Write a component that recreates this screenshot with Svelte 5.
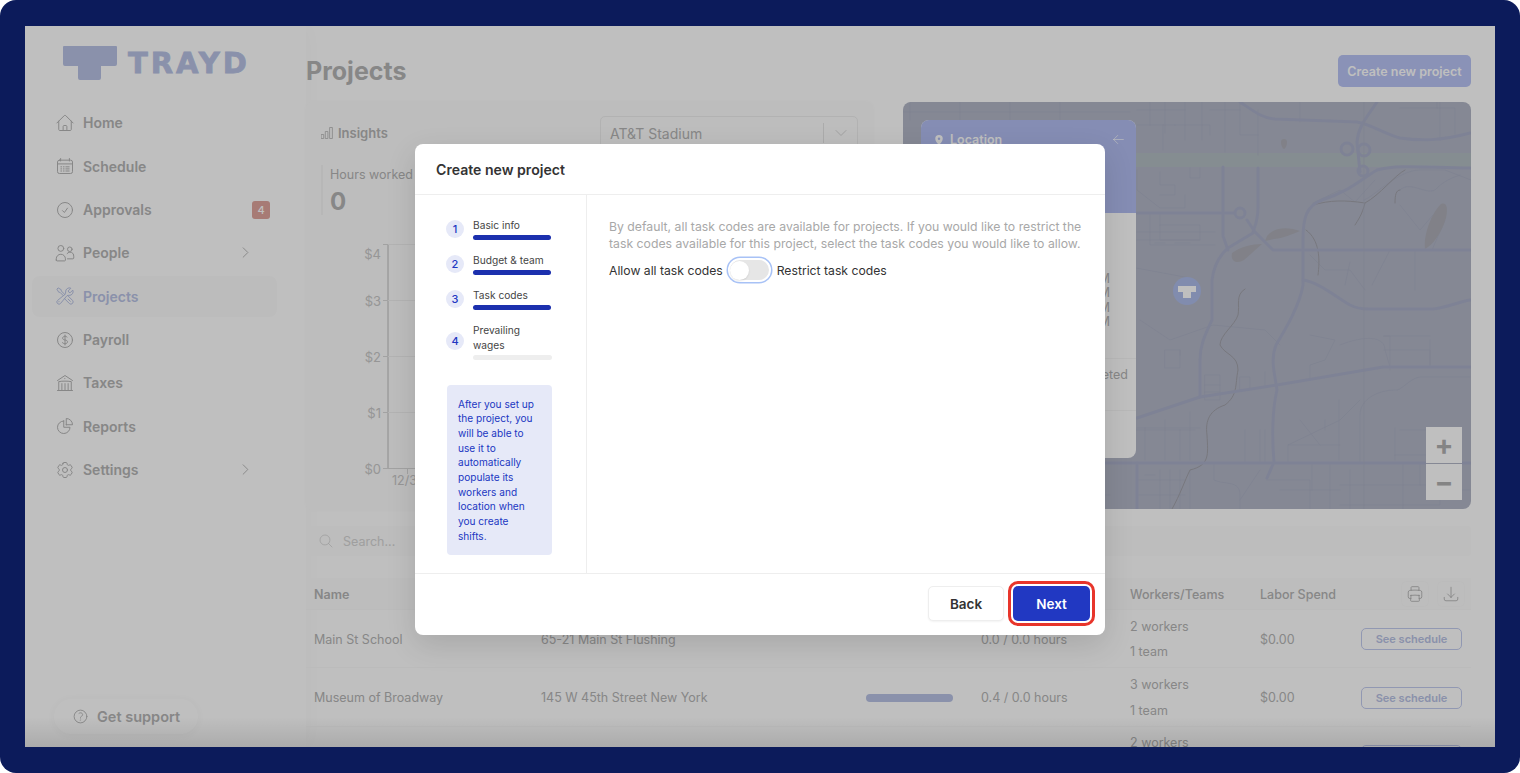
<script>
  const nav = [
    { label: 'Home', icon: 'M2.25 12l8.954-8.955c.44-.439 1.152-.439 1.591 0L21.75 12M4.5 9.75v10.125c0 .621.504 1.125 1.125 1.125H9.75v-4.875c0-.621.504-1.125 1.125-1.125h2.25c.621 0 1.125.504 1.125 1.125V21h4.125c.621 0 1.125-.504 1.125-1.125V9.75M8.25 21h8.25' },
    { label: 'Schedule', icon: 'M6.75 3v3M17.25 3v3M5.25 5h13.5A2.25 2.25 0 0121 7.25v11.5A2.25 2.25 0 0118.75 21H5.25A2.25 2.25 0 013 18.75V7.25A2.25 2.25 0 015.25 5zM3 9.5h18M7 13h1M10 13h1M13 13h4M7 15.5h1M10 15.5h1M13 15.5h4M7 18h1M10 18h1M13 18h4' },
    { label: 'Approvals', icon: 'M9 12.75L11.25 15 15 9.75M21 12a9 9 0 11-18 0 9 9 0 0118 0z', badge: '4' },
    { label: 'People', icon: 'M10.5 6.5a3.5 3.5 0 11-7 0 3.5 3.5 0 017 0zM20.5 7.5a2.75 2.75 0 11-5.5 0 2.75 2.75 0 015.5 0zM1.5 20.5v-1.5a5.5 5.5 0 0111 0v1.5c0 .6-.4 1-1 1h-9c-.6 0-1-.4-1-1zM14.5 12.6a4.5 4.5 0 018 3.2v2.2c0 .6-.4 1-1 1h-6.5', chevron: true },
    { label: 'Projects', active: true, icon: 'M11.42 15.17L17.25 21A2.652 2.652 0 0021 17.25l-5.877-5.877M11.42 15.17l2.496-3.03c.317-.384.74-.626 1.208-.766M11.42 15.17l-4.655 5.653a2.548 2.548 0 11-3.586-3.586l6.837-5.63m5.108-.233c.55-.164 1.163-.188 1.743-.14a4.5 4.5 0 004.486-6.336l-3.276 3.277a3.004 3.004 0 01-2.25-2.25l3.276-3.276a4.5 4.5 0 00-6.336 4.486c.091 1.076-.071 2.264-.904 2.95l-.102.085m-1.745 1.437L5.909 7.5H4.5L2.25 3.75l1.5-1.5L7.5 4.5v1.409l4.26 4.26m-1.745 1.437l1.745-1.437m6.615 8.206L15.75 15.75M4.867 19.125h.008v.008h-.008v-.008z' },
    { label: 'Payroll', icon: 'M12 6v12m-3-2.818l.879.659c1.171.879 3.07.879 4.242 0 1.172-.879 1.172-2.303 0-3.182C13.536 12.219 12.768 12 12 12c-.725 0-1.45-.22-2.003-.659-1.106-.879-1.106-2.303 0-3.182s2.9-.879 4.006 0l.415.33M21 12a9 9 0 11-18 0 9 9 0 0118 0z' },
    { label: 'Taxes', icon: 'M12 21v-8.25M15.75 21v-8.25M8.25 21v-8.25M3 9l9-6 9 6m-1.5 12V10.332A48.36 48.36 0 0012 9.75c-2.551 0-5.056.2-7.5.582V21M3 21h18M12 6.75h.008v.008H12V6.75z' },
    { label: 'Reports', icon: 'M10.5 6a7.5 7.5 0 107.5 7.5h-7.5V6zM13.5 10.5H21A7.5 7.5 0 0013.5 3v7.5z' },
    { label: 'Settings', chevron: true, icon: 'M9.594 3.94c.09-.542.56-.94 1.11-.94h2.593c.55 0 1.02.398 1.11.94l.213 1.281c.063.374.313.686.645.87.074.04.147.083.22.127.324.196.72.257 1.075.124l1.217-.456a1.125 1.125 0 011.37.49l1.296 2.247a1.125 1.125 0 01-.26 1.431l-1.003.827c-.293.24-.438.613-.431.992a6.759 6.759 0 010 .255c-.007.378.138.75.43.99l1.005.828c.424.35.534.954.26 1.43l-1.298 2.247a1.125 1.125 0 01-1.369.491l-1.217-.456c-.355-.133-.75-.072-1.076.124a6.57 6.57 0 01-.22.128c-.331.183-.581.495-.644.869l-.213 1.28c-.09.543-.56.941-1.11.941h-2.594c-.55 0-1.02-.398-1.11-.94l-.213-1.281c-.062-.374-.312-.686-.644-.87a6.52 6.52 0 01-.22-.127c-.325-.196-.72-.257-1.076-.124l-1.217.456a1.125 1.125 0 01-1.369-.49l-1.297-2.247a1.125 1.125 0 01.26-1.431l1.004-.827c.292-.24.437-.613.43-.992a6.932 6.932 0 010-.255c.007-.378-.138-.75-.43-.99l-1.004-.828a1.125 1.125 0 01-.26-1.43l1.297-2.247a1.125 1.125 0 011.37-.491l1.216.456c.356.133.751.072 1.076-.124.072-.044.146-.087.22-.128.332-.183.582-.495.644-.869l.214-1.281zM15 12a3 3 0 11-6 0 3 3 0 016 0z' }
  ];

  const rows = [
    { name: 'Main St School', address: '65-21 Main St Flushing', bar: false, hours: '0.0 / 0.0 hours', workers: '2 workers', teams: '1 team', spend: '$0.00' },
    { name: 'Museum of Broadway', address: '145 W 45th Street New York', bar: true, hours: '0.4 / 0.0 hours', workers: '3 workers', teams: '1 team', spend: '$0.00' },
    { name: '', address: '', bar: false, hours: '', workers: '2 workers', teams: '1 team', spend: '' }
  ];

  const steps = [
    { n: 1, label: 'Basic info', done: true },
    { n: 2, label: 'Budget & team', done: true },
    { n: 3, label: 'Task codes', done: true },
    { n: 4, label: 'Prevailing wages', done: false }
  ];

  const yTicks = ['$4', '$3', '$2', '$1', '$0'];
  const times = ['8:00 AM', '9:00 AM', '10:00 AM', '11:00 AM'];

  const majorRoads = [
    'M1240 102C1255 112 1262 118 1275 119L1357 122C1370 124 1385 134 1400 138C1420 141 1440 141 1470 133',
    'M1377 102C1368 116 1358 126 1357 142L1360 172',
    'M1470 168C1430 168 1400 164 1377 170C1360 180 1348 192 1322 200C1306 206 1303 218 1303 240L1303 285C1300 305 1285 330 1276 345C1270 360 1275 375 1277 390C1272 410 1272 440 1274 462L1267 478',
    'M1258 168V207C1258 222 1254 228 1253 232',
    'M1223 167V236L1228 250',
    'M1137 213H1233',
    'M1247 220L1255 232L1273 250H1470',
    'M1253 233L1228 248C1220 255 1214 265 1212 280V320C1205 335 1200 345 1200 360V397',
    'M1303 280C1318 282 1335 296 1350 305C1356 308 1362 309 1368 309H1433C1445 308 1458 302 1470 300',
    'M1137 418L1200 397L1277 385L1383 367H1470',
    'M1100 463H1470',
    'M903 463H925',
    'M903 150H921',
    'M1137 463V509'
  ];

  const minorRoads = [
    'M1137 110H1185M1150 102V125M1165 102V133M1185 102V140M1175 125H1210V135M1202 102V140',
    'M1137 125H1175M1163 125V150M1210 110H1240M1225 102V152M1240 102V135H1258M1258 110V155',
    'M1300 102V122M1440 102V140M1400 108H1455V134M1437 102V108',
    'M1137 170V190L1160 208H1185V195M1160 172V185H1175V195H1160M1190 168V178H1200V168',
    'M1150 213V245H1215M1160 213V240H1200V225H1160M1137 232H1215M1137 240H1200',
    'M1155 243H1165M1175 243H1190M1120 265L1190 278V290',
    'M1313 203L1340 190L1355 202L1375 180',
    'M1364 200C1375 196 1398 170 1420 170H1445L1471 180M1400 190C1410 180 1425 195 1435 190C1440 185 1445 180 1460 175',
    'M1400 205L1420 230L1433 215L1445 220L1432 250',
    'M1350 262L1345 285M1390 250L1372 285M1415 250V290',
    'M1140 320L1170 340L1213 325L1265 330L1280 345',
    'M1165 350H1180V368H1165ZM1180 350V355',
    'M1310 255L1325 270H1350L1365 290',
    'M1310 335L1335 340L1325 360L1310 365V380',
    'M1340 345C1365 335 1385 336 1385 350L1390 367',
    'M1384 336H1390V370M1384 350H1430V365M1430 340V367M1384 336H1430',
    'M1205 375H1220V400H1205ZM1205 385H1220M1205 392H1220',
    'M1240 377H1250V390H1240ZM1265 372V386',
    'M1360 400L1340 420L1288 445V445H1340M1325 420V430M1339 400V460M1288 445V463M1300 420L1320 445',
    'M1470 377H1420C1410 378 1400 392 1395 390C1380 390 1360 398 1360 415V463',
    'M1400 430H1430M1395 428V460M1395 455H1430',
    'M1145 428V460M1165 420V460M1190 412V460M1180 430V460M1245 430V463M1260 430V463M1265 430V463',
    'M1100 430H1195M1137 428H1200',
    'M1160 470V509M1170 470V509M1180 470V509M1190 470V509M1137 480H1185M1137 495H1185M1145 475H1155',
    'M1214 463V480C1225 485 1240 480 1240 495V509M1260 470L1240 500',
    'M1267 480H1310V509M1312 463V490M1330 463V509M1350 470V509M1280 490H1340',
    'M1340 485H1440V505H1340M1403 463V509M1420 463V485M1440 470V480M1470 490H1445',
    'M903 475H921M903 490H921M912 463V509',
    'M925 463V509M940 463V509M960 470V509M985 470V509M1000 463V509M1020 480V509M1060 470V509M1100 463V509',
    'M925 480H1100M950 495H1110',
    'M910 102V120M960 102V120M1010 102V120M1060 102V120M903 112H1130',
    'M903 200H921M903 300L921 290M903 380H921M912 225V260'
  ];

  const creek = [
    'M1313 205C1330 200 1345 200 1365 203C1362 215 1358 220 1355 225',
    'M1365 203C1380 195 1395 175 1405 170M1395 203C1395 195 1396 190 1400 190',
    'M1306 230C1320 240 1320 260 1318 275',
    'M1245 289C1235 295 1240 305 1238 315C1235 325 1220 335 1220 345C1225 355 1238 355 1238 370C1235 385 1238 395 1225 405C1210 410 1205 420 1207 435C1208 455 1210 465 1190 470C1185 480 1180 495 1172 509'
  ];

  const lakes = [
    'M1267 236C1275 226 1290 227 1300 231C1292 234 1285 238 1274 239L1265 241Z',
    'M1232 253C1240 247 1252 244 1262 244C1255 250 1250 255 1244 260C1238 264 1230 262 1232 253Z',
    'M1441 204C1447 202 1448 208 1446 218C1442 232 1433 245 1425 249C1423 235 1432 212 1441 204Z',
    'M1281 142a3 3 0 016 0c0 4-2 7-3 7s-3-3-3-7z'
  ];

  const loops = [
    { cx: 1347, cy: 149, r: 6 },
    { cx: 1364, cy: 150, r: 6 },
    { cx: 1363, cy: 171, r: 5 },
    { cx: 1240, cy: 213, r: 5 }
  ];
</script>

<div class="frame">
  <div class="app">
    <aside class="sidebar">
      <div class="logo">
        <svg class="logo-mark" viewBox="0 0 54 34" aria-hidden="true">
          <path d="M1 0H53a1 1 0 011 1V18a2 2 0 01-2 2H38V32a2 2 0 01-2 2H17a2 2 0 01-2-2V20H2a2 2 0 01-2-2V1a1 1 0 011-1z" />
        </svg>
        <span class="logo-text">TRAYD</span>
      </div>
      <nav class="nav">
        {#each nav as item}
          <div class="nav-row" class:active={item.active}>
            <svg class="nav-icon" viewBox="0 0 24 24" aria-hidden="true"><path d={item.icon} /></svg>
            <span class="nav-label">{item.label}</span>
            {#if item.badge}<span class="badge">{item.badge}</span>{/if}
            {#if item.chevron}
              <svg class="chevron" viewBox="0 0 24 24" aria-hidden="true"><path d="M8.25 4.5l7.5 7.5-7.5 7.5" /></svg>
            {/if}
          </div>
        {/each}
      </nav>
      <div class="support">
        <svg viewBox="0 0 24 24" aria-hidden="true"><path d="M9.879 7.519c1.171-1.025 3.071-1.025 4.242 0 1.172 1.025 1.172 2.687 0 3.712-.203.179-.43.326-.67.442-.745.361-1.45.999-1.45 1.827v.75M21 12a9 9 0 11-18 0 9 9 0 0118 0zm-9 5.25h.008v.008H12v-.008z" /></svg>
        <span>Get support</span>
      </div>
    </aside>

    <main class="main">
      <header class="top">
        <h1>Projects</h1>
        <button class="create">Create new project</button>
      </header>

      <section class="panels">
        <div class="insights">
          <div class="insights-head">
            <div class="insights-title">
              <svg viewBox="0 0 12 12" aria-hidden="true"><path d="M.5 7.5h2.2v4H.5zM4.7 4.5h2.2v7H4.7zM9 .5h2.4v11H9z" /></svg>
              <span>Insights</span>
            </div>
            <div class="select">
              <span>AT&amp;T Stadium</span>
              <i class="select-sep"></i>
              <svg viewBox="0 0 24 24" aria-hidden="true"><path d="M4.5 8.25l7.5 7.5 7.5-7.5" /></svg>
            </div>
          </div>
          <div class="stat">
            <div class="stat-label">Hours worked</div>
            <div class="stat-value">0</div>
          </div>
          <div class="chart">
            <div class="y-labels">
              {#each yTicks as t}
                <div class="y-row">
                  <span class="y-text">{t}</span>
                  <i class="y-tick"></i>
                </div>
              {/each}
            </div>
            <div class="x-row">
              <i class="x-tick"></i>
              <span>12/31</span>
            </div>
          </div>
        </div>

        <div class="map">
          <svg class="map-art" viewBox="903 102 568 407" preserveAspectRatio="none" aria-hidden="true">
            <path class="highway" d="M903 160H1471" />
            {#each minorRoads as d}<path class="minor" {d} />{/each}
            {#each lakes as d}<path class="lake" {d} />{/each}
            {#each creek as d}<path class="creek" {d} />{/each}
            {#each majorRoads as d}<path class="major" {d} />{/each}
            {#each loops as c}<circle class="major" cx={c.cx} cy={c.cy} r={c.r} />{/each}
            <path class="meridian" d="M1364 102V509" />
            <circle class="pin-bg" cx="1187" cy="291" r="14" />
            <path class="pin-t" d="M1178 286H1196V292H1191V298H1183V292H1178Z" />
          </svg>
          <div class="loc-panel">
            <div class="loc-head">
              <svg viewBox="0 0 24 24" aria-hidden="true"><path d="M12 2a7.5 7.5 0 00-7.5 7.5C4.5 15 12 22 12 22s7.5-7 7.5-12.5A7.5 7.5 0 0012 2zm0 10a2.5 2.5 0 110-5 2.5 2.5 0 010 5z" /></svg>
              <span class="loc-title">Location</span>
              <svg class="loc-back" viewBox="0 0 24 24" aria-hidden="true"><path d="M10.5 19.5L3 12m0 0l7.5-7.5M3 12h18" /></svg>
            </div>
            <div class="loc-times">
              {#each times as t}<div>{t}</div>{/each}
            </div>
            <div class="loc-status">Completed</div>
          </div>
          <div class="zoom-ctl">
            <button>+</button>
            <button>−</button>
          </div>
        </div>
      </section>

      <div class="search">
        <svg viewBox="0 0 24 24" aria-hidden="true"><path d="M21 21l-5.197-5.197m0 0A7.5 7.5 0 105.196 5.196a7.5 7.5 0 0010.607 10.607z" /></svg>
        <span>Search...</span>
      </div>

      <div class="table">
        <div class="t-row t-head">
          <span>Name</span>
          <span>Address</span>
          <span>Progress</span>
          <span>Hours</span>
          <span>Workers/Teams</span>
          <span>Labor Spend</span>
          <span class="t-actions">
            <i class="icon-btn"><svg viewBox="0 0 24 24" aria-hidden="true"><path d="M6.72 13.829c-.24.03-.48.062-.72.096m.72-.096a42.415 42.415 0 0110.56 0m-10.56 0L6.34 18m10.94-4.171c.24.03.48.062.72.096m-.72-.096L17.66 18m0 0l.229 2.523a1.125 1.125 0 01-1.12 1.227H7.231c-.662 0-1.18-.568-1.12-1.227L6.34 18m11.318 0h1.091A2.25 2.25 0 0021 15.75V9.456c0-1.081-.768-2.015-1.837-2.175a48.055 48.055 0 00-1.913-.247M6.34 18H5.25A2.25 2.25 0 013 15.75V9.456c0-1.081.768-2.015 1.837-2.175a48.041 48.041 0 011.913-.247m10.5 0a48.536 48.536 0 00-10.5 0m10.5 0V3.375c0-.621-.504-1.125-1.125-1.125h-8.25c-.621 0-1.125.504-1.125 1.125v3.659" /></svg></i>
            <i class="icon-btn"><svg viewBox="0 0 24 24" aria-hidden="true"><path d="M3 16.5v2.25A2.25 2.25 0 005.25 21h13.5A2.25 2.25 0 0021 18.75V16.5M16.5 12L12 16.5m0 0L7.5 12m4.5 4.5V3" /></svg></i>
          </span>
        </div>
        {#each rows as r}
          <div class="t-row t-body">
            <span>{r.name}</span>
            <span>{r.address}</span>
            <span>{#if r.bar}<i class="progress"></i>{/if}</span>
            <span>{r.hours}</span>
            <span class="stack"><b>{r.workers}</b><b>{r.teams}</b></span>
            <span>{r.spend}</span>
            <span><button class="see">See schedule</button></span>
          </div>
        {/each}
      </div>
    </main>

    <div class="scrim"></div>

    <div class="modal" role="dialog" aria-label="Create new project">
      <div class="modal-head">Create new project</div>
      <div class="modal-body">
        <div class="steps-col">
          <ol class="steps">
            {#each steps as s}
              <li class="step">
                <span class="step-num">{s.n}</span>
                <div class="step-main">
                  <span class="step-label">{s.label}</span>
                  <i class="step-bar" class:done={s.done}></i>
                </div>
              </li>
            {/each}
          </ol>
          <p class="note">After you set up the project, you will be able to use it to automatically populate its workers and location when you create shifts.</p>
        </div>
        <div class="content">
          <p class="desc">By default, all task codes are available for projects. If you would like to restrict the task codes available for this project, select the task codes you would like to allow.</p>
          <div class="toggle-row">
            <span>Allow all task codes</span>
            <span class="toggle"><i></i></span>
            <span>Restrict task codes</span>
          </div>
        </div>
      </div>
      <div class="modal-foot">
        <button class="back">Back</button>
        <button class="next">Next</button>
      </div>
    </div>
  </div>
</div>

<style>
  :global(body) {
    margin: 0;
    background: #fff;
    font-family: Inter, "Noto Sans", sans-serif;
  }
  * { box-sizing: border-box; }
  i { display: block; font-style: normal; }
  b { font-weight: 400; display: block; }
  button { font-family: inherit; }
  svg { display: block; fill: none; stroke: currentColor; stroke-width: 1.5; stroke-linecap: round; stroke-linejoin: round; }

  .frame {
    height: 773px;
    padding: 26px 25px;
    background: #0c1b5b;
    border-radius: 16px;
    overflow: hidden;
  }
  .app {
    position: relative;
    display: flex;
    height: 721px;
    overflow: hidden;
    background: #fff;
    color: #b4b4b4;
  }

  .sidebar {
    flex: 0 0 281px;
    display: flex;
    flex-direction: column;
    padding: 20px 29px 13px 7px;
    box-shadow: 2px 0 20px rgba(0, 0, 0, .02);
  }
  .logo { display: flex; align-items: flex-start; height: 34px; margin-left: 31px; gap: 11px; }
  .logo-mark { flex: none; width: 54px; height: 34px; fill: #b8c2e4; stroke: none; }
  .logo-text {
    font-family: "DejaVu Sans", sans-serif;
    font-size: 29px; line-height: 27px; font-weight: 700; letter-spacing: 3px;
    color: #b8c2e4; margin-top: 4px; -webkit-text-stroke: .8px #b8c2e4;
  }
  .nav { display: flex; flex-direction: column; gap: 2.33px; margin-top: 22.4px; }
  .nav-row {
    display: flex; align-items: center; gap: 8px; height: 41px; padding-left: 23px;
    border-radius: 8px; font-size: 14px; font-weight: 600; position: relative;
  }
  .nav-row.active { background: #fbfbfb; color: #b8c2e4; }
  .nav-icon { width: 20px; height: 20px; stroke-width: 1.2; }
  .badge {
    position: absolute; left: 220px; top: 12px; width: 18px; height: 18px; border-radius: 3px;
    background: #dfa49c; color: #fff; font-size: 11px; font-weight: 500;
    display: flex; align-items: center; justify-content: center;
  }
  .chevron { position: absolute; left: 206px; top: 13px; width: 15px; height: 15px; }
  .support {
    margin: auto 0 0 22px; width: 144px; height: 35px; border-radius: 18px;
    display: flex; align-items: center; gap: 8px; padding-left: 18px;
    font-size: 14.5px; font-weight: 600;
    box-shadow: 0 1px 8px rgba(0, 0, 0, .04);
  }
  .support svg { width: 17px; height: 17px; stroke-width: 1.3; }

  .main { flex: 1; min-width: 0; padding: 29px 24px 0 0; }
  .top { display: flex; align-items: center; justify-content: space-between; height: 32px; }
  h1 { margin: 0; font-size: 25px; line-height: 32px; font-weight: 700; color: #b4b4b4; }
  .create {
    width: 133px; height: 32px; border: 0; border-radius: 5px; padding: 0;
    background: #b8c3f4; color: #fff; font-size: 12.5px; font-weight: 600;
  }

  .panels { display: grid; grid-template-columns: 567px 568px; column-gap: 30px; margin-top: 15px; height: 408px; }
  .insights {
    border-radius: 6px; background: #fcfcfc; padding: 14px 15px 0 15px; height: 408px;
    box-shadow: 0 0 4px rgba(0, 0, 0, .02);
  }
  .insights-head { display: flex; justify-content: space-between; align-items: flex-start; height: 49px; }
  .insights-title { display: flex; align-items: center; gap: 5px; font-size: 13px; font-weight: 600; margin-top: 9px; }
  .insights-title svg { width: 12px; height: 12px; stroke-width: .8; }
  .select {
    width: 258px; height: 36px; border: 1px solid #eee; border-radius: 5px;
    display: flex; align-items: center; padding: 0 0 2px 9px; font-size: 14px;
  }
  .select span { flex: 1; color: #b4b4b4; }
  .select-sep { width: 1px; height: 20px; background: #e4e4e4; }
  .select svg { width: 16px; height: 16px; margin: 0 8px 0 9px; color: #d8d8d8; }
  .stat { border-left: 2px solid #f4f4f4; padding-left: 7px; height: 50px; }
  .stat-label { font-size: 12.5px; line-height: 18px; padding-top: 1px; box-sizing: content-box; }
  .stat-value { font-size: 24px; line-height: 28px; font-weight: 700; margin-top: 4px; }

  .chart { position: relative; margin-top: 29px; margin-left: 45px; }
  .y-labels { display: flex; flex-direction: column; height: 225px; justify-content: space-between; }
  .y-row { position: relative; height: 1px; background: #efefef; margin-left: 22px; }
  .y-tick { position: absolute; left: -5px; width: 5px; top: 0; height: 1px; background: #d8d8d8; }
  .y-text { position: absolute; right: 100%; margin-right: 7px; top: -7px; font-size: 13px; line-height: 16px; color: #c8c8c8; white-space: nowrap; }
  .y-row:first-child .y-text { top: 2px; }
  .y-labels::before { content: ""; position: absolute; left: 21px; top: 0; width: 2px; height: 225px; background: #dcdcdc; }
  .y-row:last-child { background: #d8d8d8; }
  .x-row { position: relative; margin-left: 41px; font-size: 12.5px; line-height: 16px; color: #c8c8c8; }
  .x-tick { position: absolute; left: 0; top: 0; width: 1px; height: 5px; background: #d8d8d8; }
  .x-row span { position: absolute; left: -15px; top: 4px; white-space: nowrap; }

  .map { position: relative; border-radius: 8px; overflow: hidden; height: 407px; background: #b2b6c6; }
  .map-art { width: 100%; height: 100%; stroke-width: 1; }
  .highway { stroke: #b2bcc2; stroke-width: 14; stroke-linecap: butt; }
  .minor { stroke: #a9aec2; stroke-width: .8; }
  .major { stroke: #a9aec7; stroke-width: 3; fill: none; }
  .creek { stroke: #a0a0a8; stroke-width: 1; }
  .lake { fill: #acadb6; stroke: none; }
  .meridian { stroke: #a9aec0; stroke-width: .8; }
  .pin-bg { fill: #adbbe8; stroke: none; }
  .pin-t { fill: #fff; stroke: none; }

  .loc-panel {
    position: absolute; left: 18px; top: 18px; width: 215px; height: 338px;
    background: #fff; border-radius: 8px; overflow: hidden; font-size: 12.5px;
  }
  .loc-head {
    height: 93px; background: #b2bdf0; color: #fff; display: flex; align-items: flex-start;
    padding: 12px 11px 0 12px; font-size: 12.5px; font-weight: 600; gap: 5px;
  }
  .loc-head svg { width: 12px; height: 12px; margin-top: 2px; fill: #fff; stroke: none; }
  .loc-title { flex: 1; }
  .loc-head .loc-back { width: 13px; height: 13px; margin-top: 1px; fill: none; stroke: #fff; stroke-width: 1.2; }
  .loc-times { margin-top: 58.5px; padding-right: 26px; text-align: right; line-height: 14.5px; }
  .loc-status {
    margin-top: 28.5px; height: 53px; padding-right: 8px; text-align: right; line-height: 16px;
    padding-top: 8px; border-top: 1px solid #f6f6f6; border-bottom: 1px solid #f6f6f6;
  }
  .zoom-ctl {
    position: absolute; right: 9px; bottom: 9px; width: 36px; height: 73px;
    display: flex; flex-direction: column; gap: 1px; background: #b2b6c6;
  }
  .zoom-ctl button {
    flex: 1; border: 0; padding: 0; background: #fff; color: #b0b0b0;
    font-size: 28px; line-height: 30px; font-weight: 700;
  }

  .search {
    display: flex; align-items: center; gap: 9px; height: 30px; margin-top: 16px; padding-left: 12px;
    border-radius: 4px; background: #fcfcfc; font-size: 12.5px; color: #d4d4d4;
  }
  .search svg { width: 16px; height: 16px; stroke-width: 1.2; }

  .table { margin-top: 22px; }
  .t-row {
    display: grid; grid-template-columns: 227px 325px 115px 149px 130px 101px 101px;
    align-items: center; padding-left: 8px; font-size: 12.5px;
    border-bottom: 1px solid #fafafa;
  }
  .t-head { height: 32px; padding-top: 1px; font-weight: 600; background: #fcfcfc; }
  .t-head span:nth-child(5), .t-head span:nth-child(6) { font-weight: 500; }
  .t-actions { display: flex; justify-content: flex-end; gap: 10px; margin-right: -2px; }
  .icon-btn { width: 26px; height: 24px; padding: 3px 4px; border-radius: 4px; background: #fcfcfc; box-shadow: 0 0 2px rgba(0,0,0,.03); }
  .icon-btn svg { width: 18px; height: 18px; stroke-width: 1.2; }
  .t-body { height: 58.3px; padding-top: 1.5px; }
  .stack b { line-height: 25.5px; }
  .progress { width: 87px; height: 8px; border-radius: 4px; background: #b8c2e4; }
  .see {
    width: 101px; height: 22px; padding: 0; border: 1px solid #c2cbee; border-radius: 5px;
    background: #fff; color: #b8c2e4; font-size: 11px; font-weight: 600;
  }

  .scrim {
    position: absolute; inset: 0;
    background: linear-gradient(to top, rgba(0, 0, 0, .1), rgba(0, 0, 0, 0) 30px), rgba(0, 0, 0, .25);
  }

  .modal {
    position: absolute; left: 390px; top: 118px; width: 690px; height: 491px;
    display: flex; flex-direction: column; background: #fff; border-radius: 8px; color: #333;
    box-shadow: 0 10px 30px rgba(0, 0, 0, .12);
  }
  .modal-head {
    height: 51px; flex: none; padding-left: 21px; display: flex; align-items: center;
    font-size: 14.1px; font-weight: 600; color: #333; border-bottom: 1px solid #eee;
  }
  .modal-body { flex: 1; display: flex; min-height: 0; }
  .steps-col { flex: 0 0 172px; min-width: 0; border-right: 1px solid #eee; padding: 22.5px 34px 0 31px; }
  .steps { list-style: none; margin: 0; padding: 0; display: flex; flex-direction: column; gap: 12.5px; }
  .step { display: flex; align-items: center; gap: 9px; width: 106px; }
  .step-num {
    flex: none; width: 18px; height: 18px; border-radius: 50%; background: #e6e9f8; color: #2137c2;
    font-size: 11px; font-weight: 500; display: flex; align-items: center; justify-content: center;
  }
  .step-main { flex: 1; }
  .step-label { display: block; font-size: 10.2px; line-height: 15px; color: #444; }
  .step-bar { height: 5px; border-radius: 3px; background: #eee; margin-top: 2.5px; width: 79px; }
  .step-bar.done { background: #1c30ae; width: 78px; }
  .note {
    margin: 25px 0 0 1px; padding: 11.5px 14px 11px 11px; width: 105px; height: 170px;
    background: #e6e9f8; border-radius: 4px; color: #2137c2; font-size: 10.1px; line-height: 14.67px;
  }
  .content { flex: 1; padding: 22.5px 22px 0 22px; font-size: 12.25px; }
  .desc { margin: 0; color: #a8a8a8; line-height: 17.5px; }
  .toggle-row { display: flex; align-items: center; gap: 5.5px; margin-top: 4px; height: 27px; color: #333; font-size: 12.2px; }
  .toggle {
    position: relative; width: 43px; height: 24px; border-radius: 14px; background: #e6e6e6;
    border: 2px solid #fff; box-shadow: 0 0 0 1.5px #a8c2f6;
  }
  .toggle i {
    position: absolute; left: 0; top: .5px; width: 19px; height: 19px; border-radius: 50%; background: #fff;
    box-shadow: 0 1px 2px rgba(0, 0, 0, .1);
  }
  .modal-foot {
    height: 62px; flex: none; border-top: 1px solid #eee; display: flex; justify-content: flex-end;
    align-items: flex-start; gap: 9px; padding: 12px 15px 0 0;
  }
  .modal-foot button {
    height: 35px; border-radius: 5px; font-size: 13.5px; font-weight: 600; padding: 0;
  }
  .back { width: 76px; border: 1px solid #eee; background: #fff; color: #333; box-shadow: 0 1px 2px rgba(0, 0, 0, .05); }
  .next {
    width: 77px; border: 0; background: #2138c2; color: #fff;
    outline: 3px solid #e8352b; outline-offset: 2px;
  }
</style>
